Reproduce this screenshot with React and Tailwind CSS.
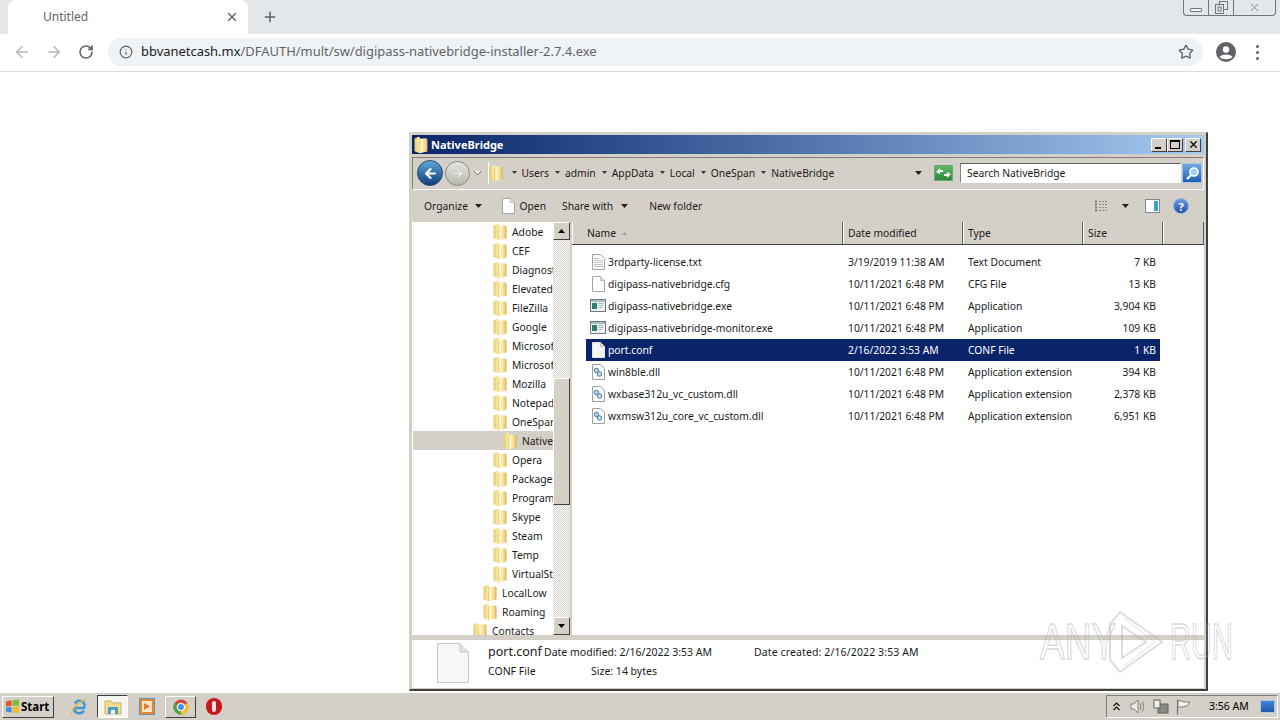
import React from "react";
import { ArrowLeft, ArrowRight, RotateCw, Plus, X, Info, Star } from "lucide-react";

const Folder = ({ className = "" }) => (
  <svg width="16" height="18" viewBox="0 0 16 18" className={"shrink-0 " + className}>
    <defs>
      <linearGradient id="fa" x1="0" x2="1" y1="0" y2="0">
        <stop offset="0" stopColor="#e6c870" />
        <stop offset="0.3" stopColor="#f8e7a0" />
        <stop offset="0.55" stopColor="#fdf4c4" />
        <stop offset="0.85" stopColor="#f0d480" />
        <stop offset="1" stopColor="#d4aa50" />
      </linearGradient>
    </defs>
    <path d="M0.5 2.5 L4.5 0.8 L6 1.5 L6 2.8 L12 2.2 L13.5 3.5 L13.5 15.5 L5.5 17.3 L0.5 15.3 Z" fill="url(#fa)" />
    <path d="M5.5 3 L5.5 17" stroke="#d8b860" strokeWidth="0.7" opacity="0.7" />
  </svg>
);

const Doc = ({ selected }) => (
  <svg width="16" height="16" viewBox="0 0 16 16" className="shrink-0">
    <path d="M2.5 0.5 H10.5 L14.5 4.5 V15.5 H2.5 Z" fill={selected ? "#f4f4f0" : "#fff"} stroke={selected ? "#e6e6e0" : "#a0a4a8"} />
    <path d="M10.5 0.5 V4.5 H14.5" fill="#e4e6e8" stroke="#b8bcc0" />
  </svg>
);

const TextDoc = () => (
  <svg width="16" height="16" viewBox="0 0 16 16" className="shrink-0">
    <path d="M2.5 0.5 H10.5 L14.5 4.5 V15.5 H2.5 Z" fill="#fbfbfb" stroke="#a0a4a8" />
    <path d="M4 4.5 H9 M4 6.5 H13 M4 8.5 H13 M4 10.5 H13 M4 12.5 H13" stroke="#bcc2c8" />
  </svg>
);

const Exe = () => (
  <svg width="16" height="16" viewBox="0 0 16 16" className="shrink-0">
    <rect x="0.5" y="1.5" width="15" height="12" fill="#eef0ee" stroke="#6c7c84" />
    <rect x="2" y="5" width="5" height="6" fill="#2f7f78" />
    <path d="M8.5 5.5 H13.5 M8.5 7.5 H13.5 M8.5 9.5 H12" stroke="#b0b8bc" />
    <path d="M1 3 H15" stroke="#8fa4b4" strokeWidth="1.4" />
  </svg>
);

const Dll = () => (
  <svg width="16" height="16" viewBox="0 0 16 16" className="shrink-0">
    <path d="M2.5 0.5 H10.5 L14.5 4.5 V15.5 H2.5 Z" fill="#fbfcfd" stroke="#9aa2a8" />
    <circle cx="6.5" cy="6.5" r="2.2" fill="#b9d3e6" stroke="#48789c" />
    <circle cx="9.5" cy="10" r="2.2" fill="#cfdfea" stroke="#48789c" />
  </svg>
);

const Tri = ({ className = "" }) => (
  <svg width="7" height="4" viewBox="0 0 7 4" className={"shrink-0 " + className}>
    <path d="M0 0 H7 L3.5 4 Z" fill="#222" />
  </svg>
);

const SmallTri = () => (
  <svg width="5" height="3" viewBox="0 0 5 3" className="shrink-0">
    <path d="M0 0 H5 L2.5 3 Z" fill="#333" />
  </svg>
);

const Crumb = ({ label, className = "" }) => (
  <span className={"flex items-center gap-[5px] " + className}>
    <SmallTri />
    <span>{label}</span>
  </span>
);

const treeRows = [
  ["Adobe", "pl-[80px]"],
  ["CEF", "pl-[80px]"],
  ["Diagnostics", "pl-[80px]"],
  ["ElevatedDiagnostics", "pl-[80px]"],
  ["FileZilla", "pl-[80px]"],
  ["Google", "pl-[80px]"],
  ["Microsoft", "pl-[80px]"],
  ["Microsoft", "pl-[80px]"],
  ["Mozilla", "pl-[80px]"],
  ["Notepad++", "pl-[80px]"],
  ["OneSpan", "pl-[80px]"],
  ["NativeBridge", "pl-[90px] bg-[#d4d0c8]"],
  ["Opera", "pl-[80px]"],
  ["Packages", "pl-[80px]"],
  ["Programs", "pl-[80px]"],
  ["Skype", "pl-[80px]"],
  ["Steam", "pl-[80px]"],
  ["Temp", "pl-[80px]"],
  ["VirtualStore", "pl-[80px]"],
  ["LocalLow", "pl-[70px]"],
  ["Roaming", "pl-[70px]"],
  ["Contacts", "pl-[60px]"],
];

const files = [
  ["3rdparty-license.txt", "3/19/2019 11:38 AM", "Text Document", "7 KB", "txt"],
  ["digipass-nativebridge.cfg", "10/11/2021 6:48 PM", "CFG File", "13 KB", "doc"],
  ["digipass-nativebridge.exe", "10/11/2021 6:48 PM", "Application", "3,904 KB", "exe"],
  ["digipass-nativebridge-monitor.exe", "10/11/2021 6:48 PM", "Application", "109 KB", "exe"],
  ["port.conf", "2/16/2022 3:53 AM", "CONF File", "1 KB", "sel"],
  ["win8ble.dll", "10/11/2021 6:48 PM", "Application extension", "394 KB", "dll"],
  ["wxbase312u_vc_custom.dll", "10/11/2021 6:48 PM", "Application extension", "2,378 KB", "dll"],
  ["wxmsw312u_core_vc_custom.dll", "10/11/2021 6:48 PM", "Application extension", "6,951 KB", "dll"],
];

const FileIcon = ({ kind }) => {
  if (kind === "txt") return <TextDoc />;
  if (kind === "doc") return <Doc />;
  if (kind === "sel") return <Doc selected />;
  if (kind === "exe") return <Exe />;
  return <Dll />;
};

const raised = "border border-t-white border-l-white border-r-[#404040] border-b-[#404040] bg-[#d4d0c8]";

const ScrollBtn = ({ up }) => (
  <div className={"h-[18px] w-[17px] shrink-0 flex items-center justify-center " + raised}>
    <svg width="7" height="4" viewBox="0 0 7 4" className={up ? "rotate-180" : ""}>
      <path d="M0 0 H7 L3.5 4 Z" fill="#000" />
    </svg>
  </div>
);

const TitleBtn = ({ children }) => (
  <div className={"w-[16px] h-[14px] flex items-center justify-center " + raised}>{children}</div>
);

const Header = ({ className = "", children }) => (
  <div className={"h-full flex items-center pt-[1px] border-r border-r-[#606060] border-l border-l-white " + className}>{children}</div>
);

export default function App() {
  return (
    <div className="relative w-[1280px] h-[720px] overflow-hidden bg-white flex flex-col font-['Noto_Sans',sans-serif]">
      {/* Browser tab strip */}
      <div className="relative h-[34px] shrink-0 bg-[#e4e7ea] flex items-end pl-[8px]">
        <div className="w-[240px] h-[34px] bg-white rounded-t-[8px] flex items-center pl-[35px] pr-[9px] text-[12px] text-[#5f6368]">
          <span className="flex-1">Untitled</span>
          <X size={14} strokeWidth={2.2} color="#5a5e62" />
        </div>
        <Plus size={16} strokeWidth={2.2} color="#5a5e62" className="ml-[14px] mb-[9px]" />
        <div className="absolute top-0 left-[1183px] w-[93px] h-[16px] flex border border-t-0 border-[#70757a] rounded-b-[4px]">
          <div className="w-[25px] flex items-center justify-center border-r border-[#70757a]">
            <div className="w-[12px] h-[4px] mt-[4px] border border-[#70757a] bg-[#f4f4f4] rounded-[1px]" />
          </div>
          <div className="w-[25px] flex items-center justify-center border-r border-[#70757a]">
            <svg width="13" height="13" viewBox="0 0 13 13">
              <rect x="4.5" y="0.5" width="8" height="8" fill="none" stroke="#70757a" />
              <rect x="0.5" y="3.5" width="8" height="9" fill="#e4e7ea" stroke="#70757a" />
              <rect x="3" y="6" width="3" height="4" fill="none" stroke="#70757a" />
            </svg>
          </div>
          <div className="flex-1 flex items-center justify-center">
            <X size={13} strokeWidth={1.5} color="#70757a" />
          </div>
        </div>
      </div>

      {/* Browser toolbar */}
      <div className="h-[38px] shrink-0 bg-white border-b border-b-[#dadce0] pb-[1px] flex items-center">
        <ArrowLeft size={18} strokeWidth={2} color="#b4b7ba" className="ml-[13px]" />
        <ArrowRight size={18} strokeWidth={2} color="#b4b7ba" className="ml-[14px]" />
        <RotateCw size={16} strokeWidth={2.4} color="#5f6368" className="ml-[15px]" />
        <div className="ml-[14px] w-[1095px] h-[28px] rounded-full bg-[#f0f3f5] flex items-center pl-[11px] pr-[9px]">
          <Info size={14} strokeWidth={2} color="#5f6368" />
          <span className="ml-[8px] flex-1 text-[12.95px] text-[#5f6368] whitespace-nowrap">
            <span className="text-[#202124]">bbvanetcash.mx</span>/DFAUTH/mult/sw/digipass-nativebridge-installer-2.7.4.exe
          </span>
          <Star size={16} strokeWidth={2} color="#5f6368" />
        </div>
        <svg width="20" height="20" viewBox="0 0 20 20" className="ml-[13px]">
          <circle cx="10" cy="10" r="10" fill="#5f6368" />
          <circle cx="10" cy="7.5" r="3.2" fill="#fff" />
          <path d="M3.5 15 C5 11.5 15 11.5 16.5 15 C14 18 6 18 3.5 15 Z" fill="#fff" />
        </svg>
        <div className="ml-[20px] flex flex-col gap-[3px]">
          <div className="w-[3px] h-[3px] rounded-full bg-[#5f6368]" />
          <div className="w-[3px] h-[3px] rounded-full bg-[#5f6368]" />
          <div className="w-[3px] h-[3px] rounded-full bg-[#5f6368]" />
        </div>
      </div>

      <div className="flex-1" />

      {/* Explorer window */}
      <div className="absolute left-[409px] top-[132px] w-[799px] h-[559px] bg-[#d4d0c8] border-t border-l border-t-[#d4d0c8] border-l-[#d4d0c8] border-r-[2px] border-b-[2px] border-r-[#404040] border-b-[#404040] pt-[2px] pl-[2px] pr-[2px] pb-[1px] flex flex-col text-[10.3px] text-[#1a1a1a] leading-none">
        <div className="h-[19px] shrink-0 bg-gradient-to-r from-[#0a246a] to-[#a6caf0] flex items-center pl-[2px] pr-[3px] text-white font-bold text-[11px]">
          <Folder />
          <span className="ml-[1px] flex-1">NativeBridge</span>
          <TitleBtn>
            <div className="w-[6px] h-[2px] bg-black mt-[6px] -ml-[2px]" />
          </TitleBtn>
          <TitleBtn>
            <div className="w-[10px] h-[9px] border border-black border-t-2" />
          </TitleBtn>
          <div className="w-[2px]" />
          <TitleBtn>
            <X size={11} strokeWidth={2.6} color="#000" />
          </TitleBtn>
        </div>

        {/* Navigation row */}
        <div className="h-[36px] shrink-0 flex items-center pt-[2px]">
          <div className="w-[792px] h-[33px] border border-t-[#808080] border-l-[#808080] border-b-white border-r-white flex items-center pl-[4px]">
            <div className="w-[26px] h-[26px] rounded-full bg-gradient-to-b from-[#5fa8d8] to-[#123e7a] border border-[#244a6c] flex items-center justify-center">
              <ArrowLeft size={15} strokeWidth={3.5} color="#fff" />
            </div>
            <div className="ml-[2px] w-[25px] h-[25px] rounded-full bg-gradient-to-b from-[#e6e6e2] to-[#b8b6ae] border border-[#8a8a84] flex items-center justify-center">
              <ArrowRight size={13} strokeWidth={2} color="#f0f0ec" />
            </div>
            <svg width="9" height="6" viewBox="0 0 9 6" className="ml-[3px]">
              <path d="M1 1 L4.5 5 L8 1" fill="#fff" stroke="#6c6c68" />
            </svg>
            <div className="ml-[6px] w-[439px] h-[22px] flex items-center border-l border-l-white bg-[#d4d0c8]">
              <Folder />
              <Crumb label="Users" className="ml-[6.5px]" />
              <Crumb label="admin" className="ml-[6px]" />
              <Crumb label="AppData" className="ml-[6px]" />
              <Crumb label="Local" className="ml-[6px]" />
              <Crumb label="OneSpan" className="ml-[6px]" />
              <Crumb label="NativeBridge" className="ml-[6px]" />
              <span className="flex-1" />
              <Tri className="mr-[5px]" />
            </div>
            <div className="ml-[7px] w-[19px] h-[16px] bg-gradient-to-b from-[#5cba62] to-[#2c8a3c] border border-[#6ca878] flex items-center justify-center">
              <svg width="15" height="10" viewBox="0 0 15 10">
                <path d="M0 4 L4 0 V2 H7 V4 H4 V6 Z M15 6 L11 10 V8 H8 V6 H11 V4 Z" fill="#fff" />
              </svg>
            </div>
            <div className="ml-[7px] w-[221px] h-[20px] bg-white border border-t-[#606060] border-l-[#808080] border-r-white border-b-white flex items-center pl-[6px]">
              Search NativeBridge
            </div>
            <div className="ml-[1px] w-[20px] h-[20px] bg-gradient-to-b from-[#74a8e0] to-[#1f5fb0] border border-[#a8c4e4] flex items-center justify-center">
              <svg width="15" height="15" viewBox="0 0 15 15">
                <circle cx="9" cy="6" r="4" fill="#9fd0f4" stroke="#fff" strokeWidth="1.6" />
                <path d="M6 9 L2 13" stroke="#fff" strokeWidth="2.2" />
              </svg>
            </div>
          </div>
        </div>

        {/* Command bar */}
        <div className="h-[32px] shrink-0 flex items-center pl-[12px]">
          <span>Organize</span>
          <Tri className="ml-[7.5px]" />
          <span className="ml-[18px]"><Doc /></span>
          <span className="ml-[3px]">Open</span>
          <span className="ml-[16px]">Share with</span>
          <Tri className="ml-[8px]" />
          <span className="ml-[21px]">New folder</span>
          <span className="flex-1" />
          <svg width="15" height="13" viewBox="0 0 15 13">
            <path d="M1 1.5 H3 M1 4.5 H3 M1 7.5 H3 M1 10.5 H3" stroke="#7a7a78" strokeWidth="2" />
            <path d="M5 1.5 H14 M5 4.5 H14 M5 7.5 H14 M5 10.5 H14" stroke="#8a8a88" strokeDasharray="2 1" />
          </svg>
          <Tri className="ml-[13px]" />
          <svg width="15" height="14" viewBox="0 0 15 14" className="ml-[16px]">
            <rect x="0.5" y="0.5" width="14" height="13" fill="#fff" stroke="#7b8b98" />
            <rect x="9" y="2" width="4" height="10" fill="#3aa0c8" />
          </svg>
          <div className="ml-[13px] mr-[15px] w-[16px] h-[16px] rounded-full bg-gradient-to-b from-[#6f9ce0] to-[#1f4fa8] border border-[#90b0e0] flex items-center justify-center text-white font-bold text-[11px]">?</div>
        </div>

        {/* Panes */}
        <div className="h-[413px] shrink-0 flex overflow-hidden">
          <div className="w-[141px] shrink-0 bg-white overflow-hidden pl-[1px] flex flex-col">
            {treeRows.map(([name, cls], i) => (
              <div key={i} className={"h-[19px] shrink-0 flex items-center whitespace-nowrap " + cls}>
                <Folder />
                <span className="ml-[3px] pt-[1px]">{name}</span>
              </div>
            ))}
          </div>
          <div className="w-[17px] shrink-0 flex flex-col bg-[repeating-conic-gradient(#d4d0c8_0%_25%,#ffffff_0%_50%)] bg-[length:2px_2px]">
            <ScrollBtn up />
            <div className="h-[138px] shrink-0" />
            <div className={"h-[127px] shrink-0 " + raised} />
            <div className="flex-1" />
            <ScrollBtn />
          </div>
          <div className="w-[2px] shrink-0" />
          <div className="flex-1 flex flex-col bg-white">
            <div className="h-[23px] shrink-0 flex bg-[#d4d0c8] border-b border-b-[#404040]">
              <Header className="w-[271px] pl-[14px]">
                Name
                <svg width="5" height="3" viewBox="0 0 5 3" className="ml-[6px]">
                  <path d="M0 3 H5 L2.5 0 Z" fill="#a0a0a0" />
                </svg>
              </Header>
              <Header className="w-[120px] pl-[4px]">Date modified</Header>
              <Header className="w-[120px] pl-[4px]">Type</Header>
              <Header className="w-[80px] pl-[4px]">Size</Header>
              <Header className="flex-1" />
            </div>
            <div className="pl-[14px] pt-[6px] flex flex-col">
              {files.map(([name, date, type, size, kind]) => (
                <div key={name} className={"w-[574px] h-[22px] flex items-center " + (kind === "sel" ? "bg-[#0a246a] text-white" : "")}>
                  <div className="w-[262px] pl-[4px] flex items-center whitespace-nowrap">
                    <FileIcon kind={kind} />
                    <span className="ml-[2px]">{name}</span>
                  </div>
                  <div className="w-[120px]">{date}</div>
                  <div className="w-[120px]">{type}</div>
                  <div className="flex-1 text-right pr-[4px]">{size}</div>
                </div>
              ))}
            </div>
          </div>
        </div>

        {/* Details pane */}
        <div className="h-[5px] shrink-0" />
        <div className="flex-1 bg-white flex pl-[25px] pt-[3px] text-[10.5px]">
          <svg width="32" height="40" viewBox="0 0 32 40" className="shrink-0">
            <path d="M0.5 0.5 H23 L31.5 9 V39.5 H0.5 Z" fill="#f7f7f5" stroke="#c8c8c4" />
            <path d="M23 0.5 V9 H31.5" fill="#e2e2de" stroke="#c8c8c4" />
          </svg>
          <div className="ml-[19px] flex flex-col">
            <div className="h-[19px] flex items-center whitespace-nowrap">
              <span className="text-[12.5px] w-[56px]">port.conf</span>
              <span className="-mt-[1px]">Date modified: 2/16/2022 3:53 AM</span>
              <span className="-mt-[1px] ml-[42px] tracking-[0.12px]">Date created: 2/16/2022 3:53 AM</span>
            </div>
            <div className="h-[18px] flex items-center whitespace-nowrap">
              <span className="w-[103px]">CONF File</span>
              <span>Size: 14 bytes</span>
            </div>
          </div>
        </div>
      </div>

      {/* Watermark */}
      <div className="absolute left-[1040px] top-[609px] w-[200px] h-[66px] flex items-center pointer-events-none font-['Liberation_Sans',sans-serif]">
        <span className="w-[68px] text-[50px] leading-none origin-left scale-x-[0.74] text-transparent [-webkit-text-stroke:1.5px_rgba(170,170,170,0.45)]">ANY</span>
        <svg width="56" height="64" viewBox="0 0 56 64" className="shrink-0">
          <path d="M12 2 L54 32 L12 62 L2 50 V14 Z M14 16 L38 32 L14 48 Z" fill="none" stroke="rgba(170,170,170,0.4)" strokeWidth="2" />
          <path d="M16 8 L47 32 L16 56" fill="none" stroke="rgba(170,170,170,0.25)" strokeWidth="1.5" />
        </svg>
        <span className="ml-[6px] text-[50px] leading-none origin-left scale-x-[0.58] text-transparent [-webkit-text-stroke:1.5px_rgba(170,170,170,0.45)]">RUN</span>
      </div>

      {/* Taskbar */}
      <div className="absolute left-0 top-[692px] w-[1280px] h-[28px] bg-[#d4d0c8] border-t border-t-white flex items-center pl-[2px] text-[11px] text-black">
        <div className={"w-[52px] h-[22px] flex items-center pl-[2px] font-bold text-[11.5px] " + raised}>
          <svg width="15" height="15" viewBox="0 0 16 15">
            <path d="M1 2 L7 1 V7 L1 7.5 Z" fill="#e8552d" />
            <path d="M8 1 L15 0 V6.5 L8 7 Z" fill="#7dbb3c" />
            <path d="M1 8.5 L7 8 V14 L1 13 Z" fill="#3c8fdc" />
            <path d="M8 8 L15 7.5 V14.5 L8 14 Z" fill="#f4bb2c" />
          </svg>
          <span className="ml-[1px]">Start</span>
        </div>
        <svg width="18" height="18" viewBox="0 0 18 18" className="ml-[16px]">
          <path d="M4 10 H14 A5 5 0 1 0 5 5.5 M4 10 A5.2 5.2 0 0 0 13.8 12.5" fill="none" stroke="#3f97d8" strokeWidth="2.6" />
          <path d="M1.5 16 C1 12 9 3 16 1.5" fill="none" stroke="#e7b83c" strokeWidth="1.4" />
        </svg>
        <div className="ml-[9px] w-[31px] h-[23px] bg-[#f6f5f0] border border-t-[#404040] border-l-[#404040] border-r-white border-b-white flex items-center justify-center">
          <svg width="18" height="16" viewBox="0 0 18 16">
            <path d="M1 2 H7 L9 4 H17 V15 H1 Z" fill="#f2dc92" stroke="#c8b060" />
            <rect x="4" y="8" width="10" height="7" fill="#4f9cc4" />
            <rect x="7" y="11" width="4" height="4" fill="#f2f2e8" />
          </svg>
        </div>
        <div className="ml-[11px] w-[16px] h-[17px] bg-[#e8872c] border border-[#5a96c8] flex items-center justify-center">
          <div className="w-[10px] h-[11px] bg-[#fbe8c8] flex items-center justify-center">
            <svg width="6" height="7" viewBox="0 0 6 7"><path d="M0 0 L6 3.5 L0 7 Z" fill="#e8782c" /></svg>
          </div>
        </div>
        <div className={"ml-[10px] w-[31px] h-[22px] flex items-center justify-center " + raised}>
          <svg width="16" height="16" viewBox="0 0 16 16">
            <circle cx="8" cy="8" r="7.5" fill="#d8453a" />
            <path d="M8 8 L14.5 4 A7.5 7.5 0 0 1 8 15.5 Z" fill="#f2c22c" />
            <path d="M8 8 L8 15.5 A7.5 7.5 0 0 1 1.5 4 Z" fill="#4da64f" />
            <circle cx="8" cy="8" r="3.6" fill="#4a8ee0" stroke="#fff" strokeWidth="1.3" />
          </svg>
        </div>
        <div className="ml-[10px] w-[16px] h-[17px] rounded-full bg-[#c8161c] flex items-center justify-center">
          <div className="w-[4px] h-[11px] rounded-full bg-[#f4e4e4]" />
        </div>

        <span className="flex-1" />

        <div className="w-[172px] h-[23px] mr-[2px] border border-t-[#808080] border-l-[#808080] border-r-white border-b-white flex items-center pl-[6px]">
          <svg width="7" height="9" viewBox="0 0 7 9">
            <path d="M0.5 4 L3.5 1 L6.5 4 M0.5 8 L3.5 5 L6.5 8" fill="none" stroke="#111" strokeWidth="1.2" />
          </svg>
          <svg width="16" height="15" viewBox="0 0 16 15" className="ml-[10px]">
            <path d="M1 5 H4 L8 1 V14 L4 10 H1 Z" fill="#f0eee8" stroke="#808080" />
            <path d="M10 4 Q12 7.5 10 11 M12.5 2.5 Q15 7.5 12.5 12.5" fill="none" stroke="#808080" />
          </svg>
          <svg width="16" height="16" viewBox="0 0 16 16" className="ml-[7px]">
            <rect x="5" y="5" width="10" height="9" fill="#888884" stroke="#606060" />
            <rect x="1" y="1" width="6" height="8" fill="#f0eee8" stroke="#606060" />
          </svg>
          <svg width="15" height="16" viewBox="0 0 15 16" className="ml-[7px]">
            <path d="M1.5 0.5 V15.5" stroke="#707070" strokeWidth="1.2" />
            <path d="M2 2 C5 1 6 3 9 3 L14 3 L11 7 L6 8 L2 8 Z" fill="#f2f0ea" stroke="#808080" />
          </svg>
          <span className="ml-[18px] flex-1 text-[10.5px]">3:56 AM</span>
          <div className="w-[15px] h-[13px] mr-[2px] bg-gradient-to-b from-[#3f87d4] to-[#1f5aa8] border border-[#b0c8e0]" />
        </div>
      </div>
    </div>
  );
}
